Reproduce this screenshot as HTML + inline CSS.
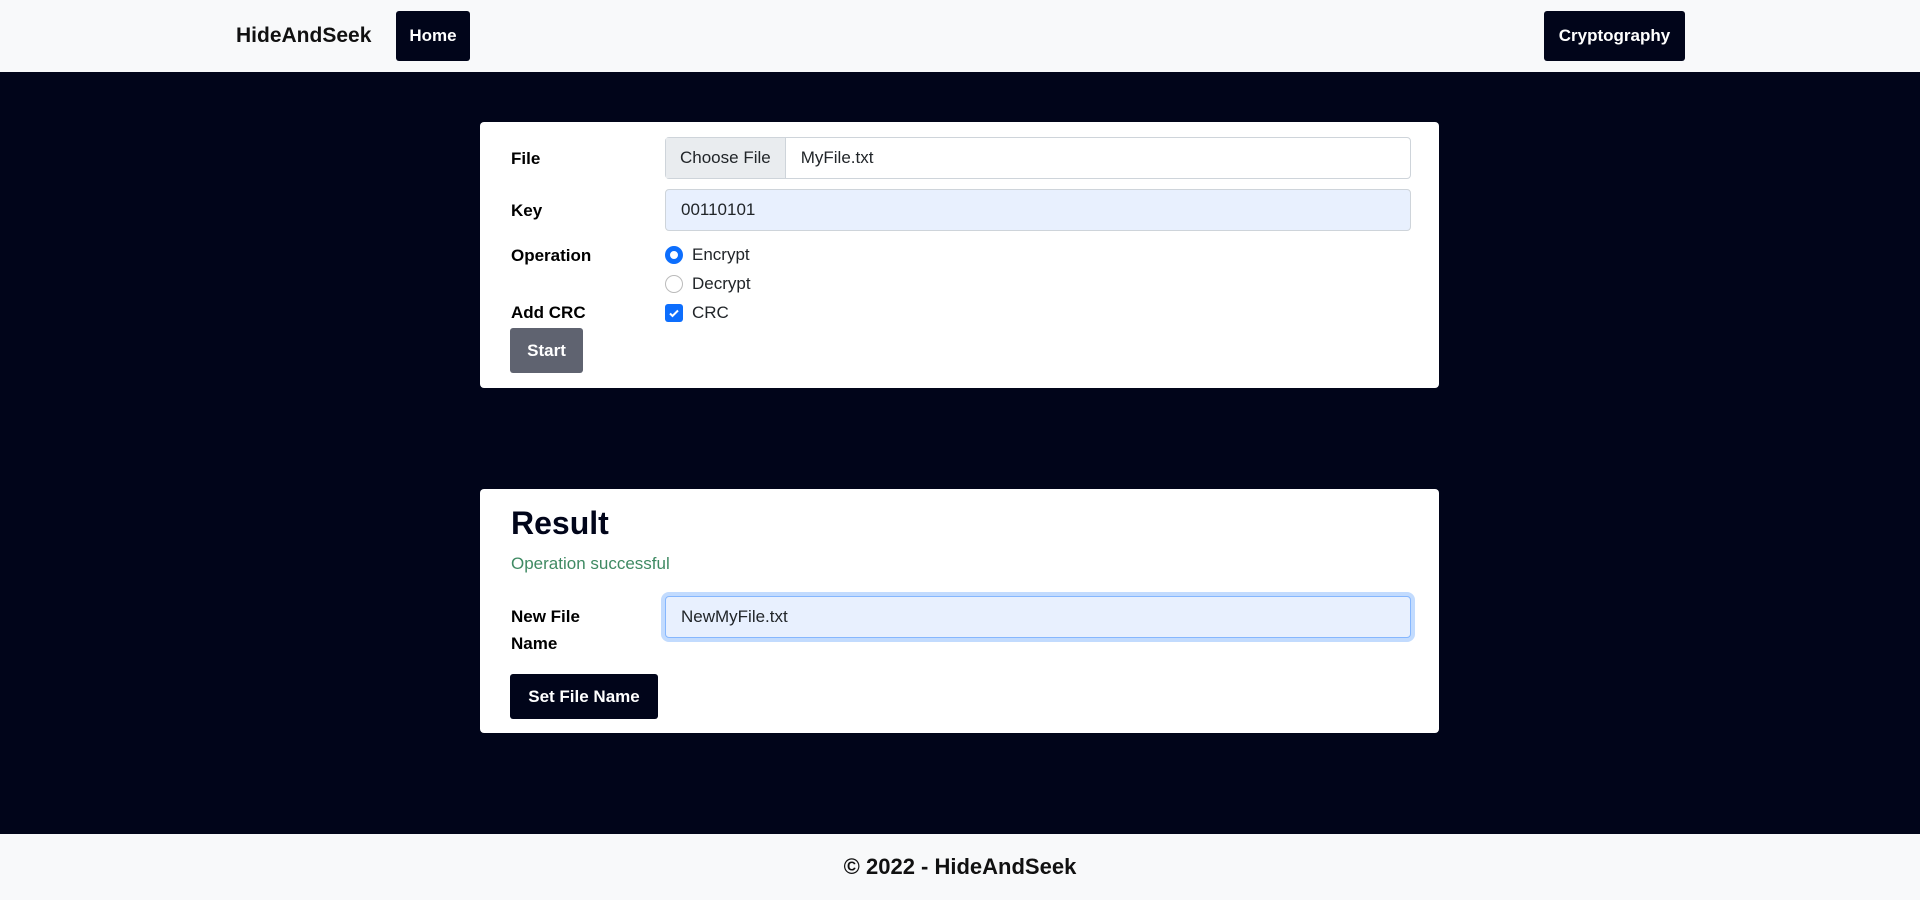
<!DOCTYPE html>
<html style="width:1920px;height:900px;overflow:hidden"><head><meta charset="utf-8"><style>
*{box-sizing:border-box;margin:0;padding:0}
body{width:1920px;height:900px;background:#01051a;font-family:"Liberation Sans",sans-serif;font-size:17px;color:#000;position:relative;overflow:hidden}
.nav{position:absolute;left:0;top:0;width:1920px;height:72px;background:#f8f9fa}
.brand{position:absolute;left:236px;top:24px;font-size:21px;font-weight:bold;color:#111}
.btn{position:absolute;background:#01051a;color:#fff;font-weight:bold;border-radius:3px;display:flex;align-items:center;justify-content:center;font-size:17px}
.card{position:absolute;left:480px;width:959px;background:#fff;border-radius:4px}
.lbl{position:absolute;left:31px;font-weight:bold;font-size:17px}
.inp{position:absolute;left:185px;width:746px;height:42px;border:1px solid #ced4da;border-radius:4px;background:#e8f0fe;display:flex;align-items:center;padding-left:15px;font-size:17px;color:#212529}
.opt{position:absolute;left:185px;display:flex;align-items:center;font-size:17px;color:#212529}
.footer{position:absolute;left:0;top:834px;width:1920px;height:66px;background:#f8f9fa;text-align:center;font-weight:bold;font-size:22px;line-height:66px;color:#111}
</style></head><body>
<div class="nav">
<div class="brand">HideAndSeek</div>
<div class="btn" style="left:396px;top:11px;width:74px;height:50px">Home</div>
<div class="btn" style="left:1544px;top:11px;width:141px;height:50px">Cryptography</div>
</div>
<div class="card" style="top:122px;height:266px">
<div class="lbl" style="top:27px">File</div>
<div class="inp" style="top:15px;background:#fff;padding-left:0">
<div style="background:#e9ecef;height:100%;display:flex;align-items:center;padding:0 14px;border-right:1px solid #ced4da">Choose File</div>
<div style="padding-left:15px">MyFile.txt</div></div>
<div class="lbl" style="top:79px">Key</div>
<div class="inp" style="top:67px">00110101</div>
<div class="lbl" style="top:124px">Operation</div>
<div class="opt" style="top:123px"><span style="width:18px;height:18px;border-radius:50%;background:#fff;border:5px solid #0d6efd;margin-right:9px"></span>Encrypt</div>
<div class="opt" style="top:152px"><span style="width:18px;height:18px;border-radius:50%;border:1px solid #bbb;margin-right:9px"></span>Decrypt</div>
<div class="lbl" style="top:181px">Add CRC</div>
<div class="opt" style="top:181px"><span style="width:18px;height:18px;border-radius:3px;background:#0d6efd;margin-right:9px;display:flex;align-items:center;justify-content:center"><svg width="12" height="12" viewBox="0 0 12 12"><path d="M2 6.5l2.5 2.5L10 3.5" stroke="#fff" stroke-width="2" fill="none"/></svg></span>CRC</div>
<div class="btn" style="left:30px;top:206px;width:73px;height:45px;background:#5f6370">Start</div>
</div>
<div class="card" style="top:489px;height:244px">
<div style="position:absolute;left:31px;top:16px;font-size:32px;font-weight:bold;color:#01051a">Result</div>
<div style="position:absolute;left:31px;top:65px;font-size:17px;color:#3f8a63">Operation successful</div>
<div class="lbl" style="top:114px;line-height:27px">New File<br>Name</div>
<div class="inp" style="top:107px;border-color:#86b7fe;box-shadow:0 0 0 4px #c2dbfe">NewMyFile.txt</div>
<div class="btn" style="left:30px;top:185px;width:148px;height:45px">Set File Name</div>
</div>
<div class="footer">© 2022 - HideAndSeek</div>
</body></html>
